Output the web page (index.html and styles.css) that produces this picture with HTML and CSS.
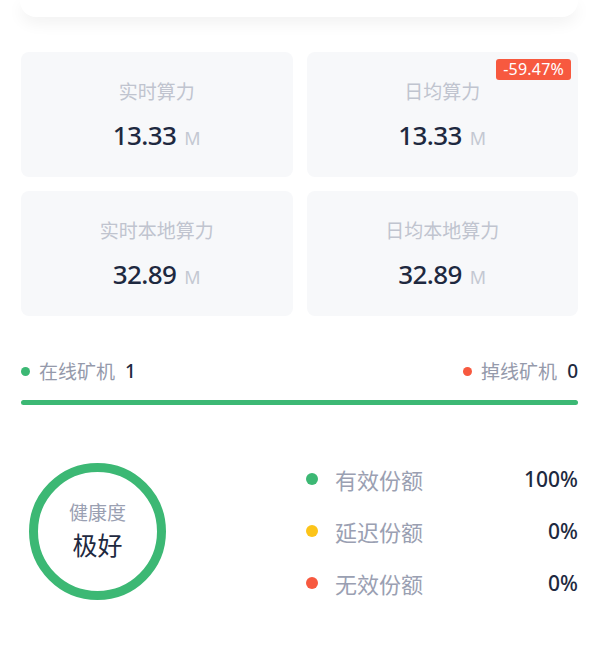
FILE: index.html
```html
<!DOCTYPE html>
<html lang="zh">
<head>
<meta charset="utf-8">
<link rel="stylesheet" href="styles.css">
</head>
<body>
<div class="page">
  <div class="top-card"></div>
  <div class="stats">
    <div class="stat">
      <div class="stat-label">实时算力</div>
      <div class="stat-value">13.33<span class="unit">M</span></div>
    </div>
    <div class="stat">
      <span class="badge">-59.47%</span>
      <div class="stat-label">日均算力</div>
      <div class="stat-value">13.33<span class="unit">M</span></div>
    </div>
    <div class="stat">
      <div class="stat-label">实时本地算力</div>
      <div class="stat-value">32.89<span class="unit">M</span></div>
    </div>
    <div class="stat">
      <div class="stat-label">日均本地算力</div>
      <div class="stat-value">32.89<span class="unit">M</span></div>
    </div>
  </div>
  <div class="miners">
    <div class="miner"><span class="dot green"></span><span class="miner-label">在线矿机</span><span class="miner-num">1</span></div>
    <div class="miner"><span class="dot red"></span><span class="miner-label">掉线矿机</span><span class="miner-num">0</span></div>
  </div>
  <div class="bar"></div>
  <div class="health">
    <div class="ring">
      <div class="ring-label">健康度</div>
      <div class="ring-value">极好</div>
    </div>
    <div class="legend">
      <div class="legend-row"><span class="ldot green"></span><span class="legend-label">有效份额</span><span class="legend-val">100%</span></div>
      <div class="legend-row"><span class="ldot yellow"></span><span class="legend-label">延迟份额</span><span class="legend-val">0%</span></div>
      <div class="legend-row"><span class="ldot red"></span><span class="legend-label">无效份额</span><span class="legend-val">0%</span></div>
    </div>
  </div>
</div>
</body>
</html>
```

FILE: styles.css
```css
* { box-sizing: border-box; }
html, body { margin: 0; padding: 0; background: #fff; }
body {
  font-family: "Noto Sans CJK SC", "Noto Sans", sans-serif;
  width: 607px;
  height: 647px;
  overflow: hidden;
}
.page {
  padding: 0 29px 0 21px;
}
.top-card {
  height: 17px;
  margin-left: -1px;
  background: #fff;
  border-radius: 0 0 16px 16px;
  box-shadow: 0 6px 16px rgba(0, 0, 0, 0.06);
}
.stats {
  margin-top: 35px;
  display: grid;
  grid-template-columns: 1fr 1fr;
  column-gap: 14px;
  row-gap: 14px;
}
.stat {
  position: relative;
  height: 125px;
  background: #f7f8fa;
  border-radius: 8px;
  padding-top: 25px;
  text-align: center;
}
.stat-label {
  font-size: 19px;
  line-height: 28px;
  color: #c0c4cf;
}
.stat-value {
  margin-top: 12px;
  font-size: 26px;
  line-height: 36px;
  font-weight: 500;
  color: #1e2940;
  font-family: "Noto Sans", "Noto Sans CJK SC", sans-serif;
  letter-spacing: -0.6px;
}
.unit {
  font-size: 18px;
  font-weight: 400;
  color: #c4c8d2;
  margin-left: 8px;
  letter-spacing: 0;
}
.badge {
  position: absolute;
  top: 7px;
  right: 7px;
  background: #f7593f;
  color: #fff;
  font-size: 16px;
  line-height: 21px;
  padding: 0 7px;
  border-radius: 3px;
  font-family: "Noto Sans", sans-serif;
  letter-spacing: 0.2px;
}
.miners {
  margin-top: 41px;
  display: flex;
  justify-content: space-between;
  align-items: center;
  line-height: 28px;
  font-size: 19px;
}
.miner {
  display: flex;
  align-items: center;
}
.dot {
  width: 9px;
  height: 9px;
  border-radius: 50%;
  margin-right: 9px;
}
.green { background: #3cb874; }
.red { background: #f7593f; }
.yellow { background: #fcc419; }
.miner-label { color: #959aab; }
.miner-num {
  color: #1e2940;
  margin-left: 10px;
  font-weight: 500;
  font-family: "Noto Sans", sans-serif;
}
.bar {
  margin-top: 15px;
  height: 5px;
  border-radius: 3px;
  background: #3cb874;
}
.health {
  margin-top: 48px;
  display: flex;
  justify-content: space-between;
  align-items: center;
}
.ring {
  margin-left: 8px;
  width: 137px;
  height: 137px;
  border: 9px solid #3cb874;
  border-radius: 50%;
  display: flex;
  flex-direction: column;
  align-items: center;
  justify-content: center;
  padding-bottom: 2px;
}
.ring-label {
  font-size: 19px;
  line-height: 28px;
  color: #9aa0b2;
}
.ring-value {
  font-size: 25px;
  line-height: 36px;
  color: #1e2940;
}
.legend {
  width: 272px;
}
.legend-row {
  height: 52px;
  display: flex;
  align-items: center;
}
.ldot {
  width: 12px;
  height: 12px;
  border-radius: 50%;
}
.legend-label {
  margin-left: 17px;
  font-size: 22px;
  color: #9aa0b2;
  flex: 1;
}
.legend-val {
  font-size: 21px;
  font-weight: 500;
  color: #1e2940;
  font-family: "Noto Sans", sans-serif;
}
```
